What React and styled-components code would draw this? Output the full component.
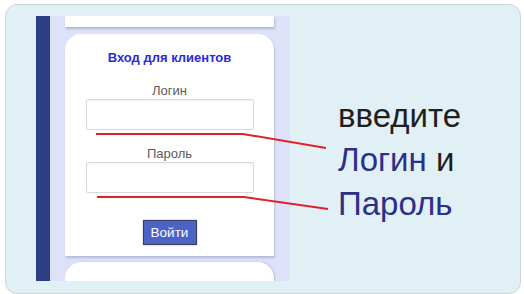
import React from "react";
import styled, { createGlobalStyle } from "styled-components";

const GlobalStyle = createGlobalStyle`
  body {
    margin: 0;
    background: #ffffff;
    font-family: "Liberation Sans", Arial, sans-serif;
  }
`;

const Frame = styled.div`
  position: relative;
  width: 524px;
  height: 294px;
  padding: 4px 3px 0 5px;
  box-sizing: border-box;
`;

const Card = styled.div`
  display: flex;
  width: 516px;
  height: 290px;
  box-sizing: border-box;
  padding: 11px 0 0 30px;
  background-color: #e1f0f4;
  border: 1px solid #cad6da;
  border-radius: 12px;
  overflow: hidden;
`;

const Shot = styled.div`
  display: flex;
  width: 254px;
  height: 265px;
  flex-shrink: 0;
  overflow: hidden;
  background-color: #dde2f9;
`;

const SideBar = styled.div`
  width: 14px;
  background-color: #2c3f86;
`;

const ShotBody = styled.div`
  display: flex;
  flex-direction: column;
  width: 209px;
  padding-left: 15px;
`;

const TopStrip = styled.div`
  height: 11px;
  background-color: #ffffff;
  box-shadow: 1px 2px 2px rgba(120, 130, 170, 0.45);
`;

const LoginCard = styled.div`
  display: flex;
  flex-direction: column;
  align-items: center;
  height: 229px;
  margin-top: 7px;
  background-color: #ffffff;
  border-radius: 16px 16px 0 0;
  box-shadow: 1px 2px 2px rgba(120, 130, 170, 0.4);
`;

const NextCard = styled.div`
  height: 20px;
  margin-top: 6px;
  background-color: #ffffff;
  border-radius: 16px 16px 0 0;
  box-shadow: 1px 0 2px rgba(120, 130, 170, 0.4);
`;

const Title = styled.div`
  margin-top: 16px;
  font-size: 13px;
  line-height: 16px;
  font-weight: bold;
  color: #2a2ad8;
`;

const Label = styled.div`
  margin-top: ${(p) => p.$gap}px;
  font-size: 13px;
  line-height: 15px;
  color: #5a5a5a;
`;

const Field = styled.div`
  width: 168px;
  height: 31px;
  margin-top: 1px;
  box-sizing: border-box;
  background-color: #ffffff;
  border: 1px solid #d9d9d9;
  border-radius: 2px;
  box-shadow: inset 0 1px 2px rgba(0, 0, 0, 0.06);
`;

const Button = styled.div`
  width: 54px;
  height: 25px;
  margin-top: 27px;
  box-sizing: border-box;
  display: flex;
  align-items: center;
  justify-content: center;
  background-color: #4b63c4;
  border: 1px solid #3a3f5c;
  box-shadow: 0 0 2px rgba(0, 0, 0, 0.3);
  color: #ffffff;
  font-size: 13.5px;
`;

const Caption = styled.div`
  padding: 78px 0 0 48px;
  font-size: 33px;
  line-height: 44px;
  color: #1f1f1f;
`;

const Key = styled.span`
  color: #2d2f88;
`;

const Marks = styled.svg`
  position: absolute;
  left: 0;
  top: 0;
  pointer-events: none;
`;

export default function App() {
  return (
    <Frame>
      <GlobalStyle />
      <Card>
        <Shot>
          <SideBar />
          <ShotBody>
            <TopStrip />
            <LoginCard>
              <Title>Вход для клиентов</Title>
              <Label $gap={17}>Логин</Label>
              <Field />
              <Label $gap={16}>Пароль</Label>
              <Field />
              <Button>Войти</Button>
            </LoginCard>
            <NextCard />
          </ShotBody>
        </Shot>
        <Caption>
          введите
          <br />
          <Key>Логин</Key> и
          <br />
          <Key>Пароль</Key>
        </Caption>
      </Card>
      <Marks width="524" height="294" viewBox="0 0 524 294">
        <polyline points="96,134 243,134 326,148" fill="none" stroke="#e2202c" strokeWidth="2" />
        <polyline points="97,197 244,197 328,209" fill="none" stroke="#e2202c" strokeWidth="2" />
      </Marks>
    </Frame>
  );
}
